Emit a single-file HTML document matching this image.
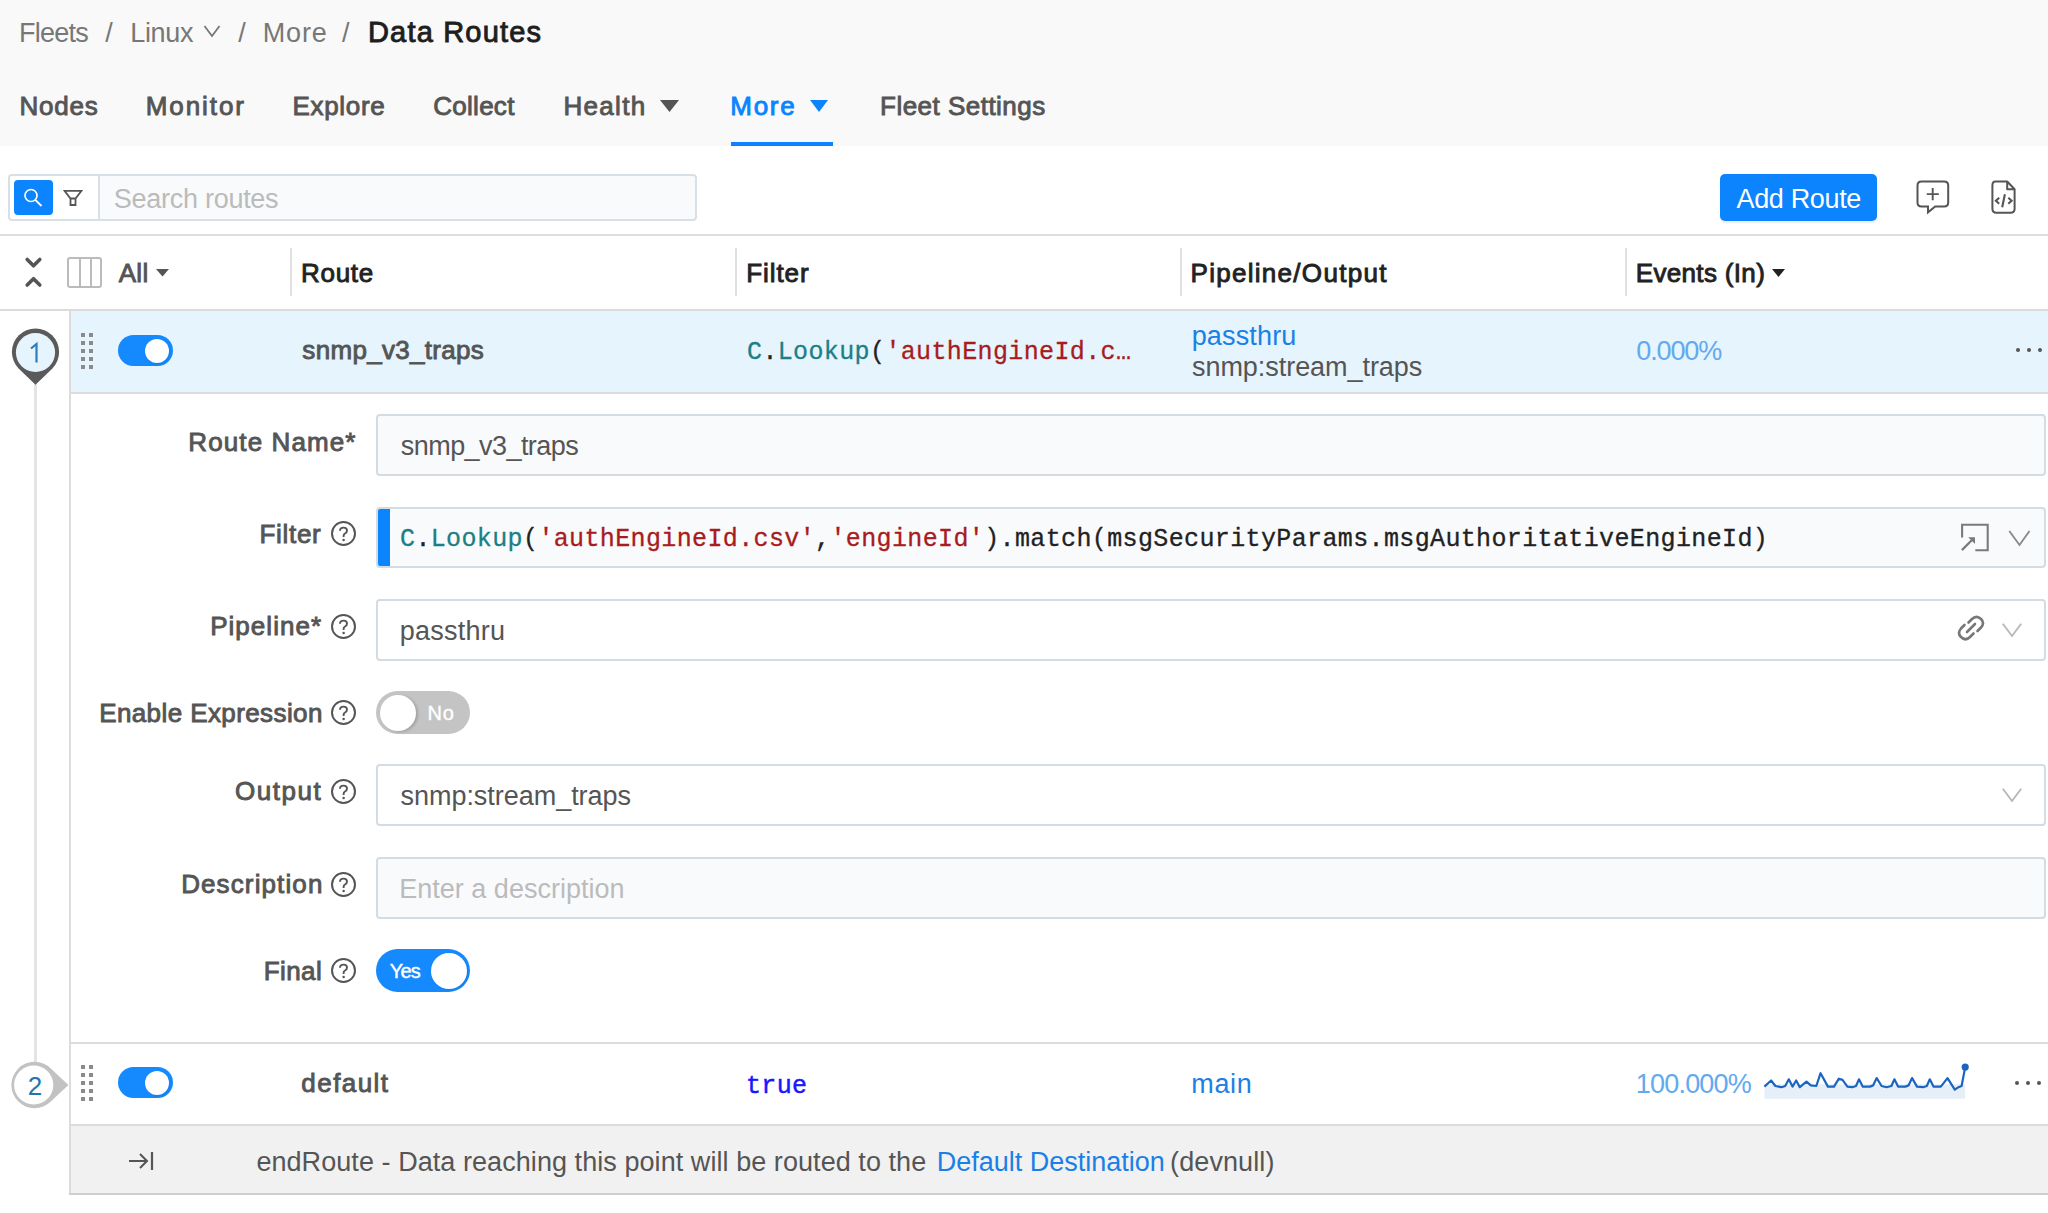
<!DOCTYPE html>
<html><head><meta charset="utf-8"><title>Data Routes</title>
<style>
html,body{margin:0;padding:0;width:2048px;height:1213px;overflow:hidden;background:#fff;font-family:"Liberation Sans",sans-serif;}
.t{position:absolute;white-space:nowrap;}
</style></head><body>
<div style="position:absolute;left:0;top:0;width:2048px;height:146px;background:#f9f9f9"></div>
<div class="t" style="left:19.10px;top:19.50px;font-size:27px;line-height:27px;color:#777;letter-spacing:-0.765px;">Fleets</div>
<div class="t" style="left:105.20px;top:19.50px;font-size:27px;line-height:27px;color:#777;">/</div>
<div class="t" style="left:130.20px;top:19.50px;font-size:27px;line-height:27px;color:#777;letter-spacing:-0.312px;">Linux</div>
<svg style="position:absolute;left:203px;top:24px" width="20" height="14" viewBox="0 0 20 14"><path d="M1.5 2 L9 12 L16.5 2" fill="none" stroke="#777" stroke-width="1.8"/></svg>
<div class="t" style="left:238.20px;top:19.50px;font-size:27px;line-height:27px;color:#777;">/</div>
<div class="t" style="left:262.80px;top:19.50px;font-size:27px;line-height:27px;color:#777;letter-spacing:0.834px;">More</div>
<div class="t" style="left:342.00px;top:19.50px;font-size:27px;line-height:27px;color:#777;">/</div>
<div class="t" style="left:367.95px;top:18.20px;font-size:29px;line-height:29px;color:#1e1e1e;-webkit-text-stroke:0.9px #1e1e1e;letter-spacing:1.190px;">Data Routes</div>
<div class="t" style="left:19.55px;top:93.00px;font-size:26px;line-height:26px;color:#555;-webkit-text-stroke:0.9px #555;letter-spacing:0.736px;">Nodes</div>
<div class="t" style="left:145.65px;top:93.00px;font-size:26px;line-height:26px;color:#555;-webkit-text-stroke:0.9px #555;letter-spacing:1.944px;">Monitor</div>
<div class="t" style="left:292.45px;top:93.00px;font-size:26px;line-height:26px;color:#555;-webkit-text-stroke:0.9px #555;letter-spacing:0.684px;">Explore</div>
<div class="t" style="left:433.25px;top:93.00px;font-size:26px;line-height:26px;color:#555;-webkit-text-stroke:0.9px #555;letter-spacing:0.275px;">Collect</div>
<div class="t" style="left:563.45px;top:93.00px;font-size:26px;line-height:26px;color:#555;-webkit-text-stroke:0.9px #555;letter-spacing:1.321px;">Health</div>
<svg style="position:absolute;left:660px;top:100px" width="19" height="12" viewBox="0 0 19 12"><path d="M0 0 H19 L9.5 12 Z" fill="#555"/></svg>
<div class="t" style="left:730.25px;top:93.00px;font-size:26px;line-height:26px;color:#0b84fe;-webkit-text-stroke:0.9px #0b84fe;letter-spacing:1.741px;">More</div>
<svg style="position:absolute;left:810px;top:100px" width="18" height="12" viewBox="0 0 18 12"><path d="M0 0 H18 L9 12 Z" fill="#0b84fe"/></svg>
<div class="t" style="left:880.05px;top:93.00px;font-size:26px;line-height:26px;color:#555;-webkit-text-stroke:0.9px #555;letter-spacing:0.479px;">Fleet Settings</div>
<div style="position:absolute;left:730.5px;top:142px;width:102.5px;height:4px;background:#0b84fe"></div>
<div style="position:absolute;left:8px;top:174px;width:685px;height:43px;border:2px solid #d8dfe6;border-radius:4px;background:#f9fafc"></div>
<div style="position:absolute;left:10px;top:176px;width:89px;height:43px;background:#fff;border-radius:3px 0 0 3px"></div>
<div style="position:absolute;left:98px;top:176px;width:2px;height:43px;background:#d8dfe6"></div>
<div style="position:absolute;left:14px;top:180px;width:39px;height:35px;background:#0b84fe;border-radius:4px"></div>
<svg style="position:absolute;left:22px;top:187px" width="22" height="22" viewBox="0 0 22 22"><circle cx="9" cy="8.5" r="6" fill="none" stroke="#fff" stroke-width="1.7"/><path d="M13.3 12.8 L19.5 19" stroke="#fff" stroke-width="1.8"/></svg>
<svg style="position:absolute;left:63px;top:188px" width="20" height="19" viewBox="0 0 20 19"><path d="M1.5 2.8 H18.5 L12.5 10.5 H7.5 Z M7.5 10.5 H12.5 V17 H7.5 Z" fill="none" stroke="#555" stroke-width="1.8" stroke-linejoin="miter"/></svg>
<div class="t" style="left:113.80px;top:185.50px;font-size:27px;line-height:27px;color:#bbb;letter-spacing:-0.274px;">Search routes</div>
<div style="position:absolute;left:1720px;top:174px;width:157px;height:47px;background:#0b84fe;border-radius:5px;box-shadow:0 2px 2px rgba(0,0,0,0.08)"></div>
<div class="t" style="left:1736.50px;top:185.70px;font-size:27px;line-height:27px;color:#fff;letter-spacing:-0.347px;">Add Route</div>
<svg style="position:absolute;left:1914px;top:179px" width="38" height="37" viewBox="0 0 38 37"><path d="M7.5 2.5 H30.2 Q34.2 2.5 34.2 6.5 V23.5 Q34.2 27.5 30.2 27.5 H21.2 L14 33.3 V27.5 H7.5 Q3.5 27.5 3.5 23.5 V6.5 Q3.5 2.5 7.5 2.5 Z" fill="none" stroke="#555" stroke-width="2" stroke-linejoin="miter"/><path d="M18.7 9 V21.2 M12.8 15.1 H24.8" stroke="#555" stroke-width="1.9"/></svg>
<svg style="position:absolute;left:1989px;top:179px" width="30" height="37" viewBox="0 0 30 37"><path d="M6.4 2.5 H18.2 L25.6 10.3 V29.8 Q25.6 33.8 21.6 33.8 H7.4 Q3.4 33.8 3.4 29.8 V6.5 Q3.4 2.5 6.4 2.5 Z M18.2 2.5 V10.3 H25.6" fill="none" stroke="#555" stroke-width="2" stroke-linejoin="round"/><path d="M10.2 18.7 L6.9 21.7 L10.2 24.7 M19.3 18.7 L22.6 21.7 L19.3 24.7 M15.9 15.3 L13.2 28.2" fill="none" stroke="#555" stroke-width="2.1"/></svg>
<div style="position:absolute;left:0;top:234px;width:2048px;height:2px;background:#dedede"></div>
<svg style="position:absolute;left:23px;top:255px" width="21" height="35" viewBox="0 0 21 35"><path d="M4.2 4.5 L10.5 10.8 L16.8 4.5 M4.2 30 L10.5 23.7 L16.8 30" fill="none" stroke="#555" stroke-width="3.6" stroke-linecap="round" stroke-linejoin="round"/></svg>
<div style="position:absolute;left:67px;top:257px;width:31px;height:27px;border:2px solid #bbb;border-radius:3px"></div>
<div style="position:absolute;left:79px;top:259px;width:2px;height:27px;background:#bbb"></div>
<div style="position:absolute;left:90px;top:259px;width:2px;height:27px;background:#bbb"></div>
<div class="t" style="left:118.65px;top:259.90px;font-size:26px;line-height:26px;color:#555;-webkit-text-stroke:0.9px #555;letter-spacing:0.391px;">All</div>
<svg style="position:absolute;left:156px;top:269px" width="13" height="8" viewBox="0 0 13 8"><path d="M0 0 H13 L6.5 7.5 Z" fill="#555"/></svg>
<div style="position:absolute;left:289.5px;top:248px;width:2px;height:48px;background:#e0e0e0"></div>
<div style="position:absolute;left:734.5px;top:248px;width:2px;height:48px;background:#e0e0e0"></div>
<div style="position:absolute;left:1179.5px;top:248px;width:2px;height:48px;background:#e0e0e0"></div>
<div style="position:absolute;left:1624.5px;top:248px;width:2px;height:48px;background:#e0e0e0"></div>
<div class="t" style="left:300.95px;top:259.90px;font-size:26px;line-height:26px;color:#222;-webkit-text-stroke:0.9px #222;letter-spacing:0.745px;">Route</div>
<div class="t" style="left:746.25px;top:259.90px;font-size:26px;line-height:26px;color:#222;-webkit-text-stroke:0.9px #222;letter-spacing:0.916px;">Filter</div>
<div class="t" style="left:1190.55px;top:259.90px;font-size:26px;line-height:26px;color:#222;-webkit-text-stroke:0.9px #222;letter-spacing:1.288px;">Pipeline/Output</div>
<div class="t" style="left:1635.75px;top:259.90px;font-size:26px;line-height:26px;color:#222;-webkit-text-stroke:0.9px #222;letter-spacing:0.335px;">Events (In)</div>
<svg style="position:absolute;left:1772px;top:269px" width="13" height="8" viewBox="0 0 13 8"><path d="M0 0 H13 L6.5 8 Z" fill="#222"/></svg>
<div style="position:absolute;left:0;top:309px;width:2048px;height:2px;background:#dcdcdc"></div>
<div style="position:absolute;left:71px;top:311px;width:1977px;height:81px;background:#e6f4fd"></div>
<div style="position:absolute;left:71px;top:392px;width:1977px;height:2px;background:#dcdcdc"></div>
<div style="position:absolute;left:69px;top:311px;width:2px;height:884px;background:#dcdcdc"></div>
<div style="position:absolute;left:33.8px;top:370px;width:3.7px;height:700px;background:#e4e4e6"></div>
<svg style="position:absolute;left:10px;top:327px" width="52" height="60" viewBox="0 0 52 60"><path d="M25.5 57.8 L8.6 41.5 A23.6 23.6 0 1 1 42.4 41.5 Z" fill="#5a5a5a"/><circle cx="25.5" cy="25.5" r="19.6" fill="#e6f4fd"/></svg>
<svg style="position:absolute;left:28px;top:342px" width="14" height="22" viewBox="0 0 14 22"><path d="M8.5 20.5 V2 L3 6.5" fill="none" stroke="#2e7db8" stroke-width="2.2" stroke-linejoin="miter"/></svg>
<div style="position:absolute;left:81px;top:333px;width:4px;height:4px;background:#8a8a8a"></div><div style="position:absolute;left:89px;top:333px;width:4px;height:4px;background:#8a8a8a"></div><div style="position:absolute;left:81px;top:341px;width:4px;height:4px;background:#8a8a8a"></div><div style="position:absolute;left:89px;top:341px;width:4px;height:4px;background:#8a8a8a"></div><div style="position:absolute;left:81px;top:349px;width:4px;height:4px;background:#8a8a8a"></div><div style="position:absolute;left:89px;top:349px;width:4px;height:4px;background:#8a8a8a"></div><div style="position:absolute;left:81px;top:357px;width:4px;height:4px;background:#8a8a8a"></div><div style="position:absolute;left:89px;top:357px;width:4px;height:4px;background:#8a8a8a"></div><div style="position:absolute;left:81px;top:365px;width:4px;height:4px;background:#8a8a8a"></div><div style="position:absolute;left:89px;top:365px;width:4px;height:4px;background:#8a8a8a"></div>
<div style="position:absolute;left:118px;top:335px;width:55px;height:31px;border-radius:16px;background:#158aff"></div><div style="position:absolute;left:145px;top:339px;width:24px;height:24px;border-radius:12px;background:#fff;box-shadow:1px 2px 3px rgba(0,0,0,0.08)"></div>
<div class="t" style="left:302.35px;top:337.20px;font-size:26px;line-height:26px;color:#555;-webkit-text-stroke:0.9px #555;letter-spacing:0.312px;">snmp_v3_traps</div>
<div class="t" id="code1" style="left:747px;top:340px;font-family:'Liberation Mono', monospace;font-size:25px;line-height:25px;letter-spacing:0.37px;-webkit-text-stroke:0.3px;color:#222"><span style="color:#1c7f86">C</span>.<span style="color:#1c7f86">Lookup</span>(<span style="color:#a81c20">'authEngineId.c…</span></div>
<div class="t" style="left:1191.70px;top:322.80px;font-size:27px;line-height:27px;color:#1a80e6;letter-spacing:0.151px;">passthru</div>
<div class="t" style="left:1192.00px;top:353.90px;font-size:27px;line-height:27px;color:#555;letter-spacing:-0.049px;">snmp:stream_traps</div>
<div class="t" style="left:1636.30px;top:337.70px;font-size:27px;line-height:27px;color:#62aaf0;letter-spacing:-1.133px;">0.000%</div>
<div style="position:absolute;left:2015.5px;top:347.5px;width:4.2px;height:4.2px;border-radius:50%;background:#555"></div><div style="position:absolute;left:2026.9px;top:347.5px;width:4.2px;height:4.2px;border-radius:50%;background:#555"></div><div style="position:absolute;left:2038.3px;top:347.5px;width:4.2px;height:4.2px;border-radius:50%;background:#555"></div>
<div class="t" style="left:188.35px;top:428.90px;font-size:26px;line-height:26px;color:#555;-webkit-text-stroke:0.9px #555;letter-spacing:1.104px;">Route Name*</div>
<div style="position:absolute;left:376px;top:414px;width:1666px;height:58px;border:2px solid #d3dbe3;border-radius:4px;background:#f9fafc"></div>
<div class="t" style="left:400.80px;top:432.50px;font-size:27px;line-height:27px;color:#555;letter-spacing:-0.558px;">snmp_v3_traps</div>
<div class="t" style="left:259.45px;top:521.10px;font-size:26px;line-height:26px;color:#555;-webkit-text-stroke:0.9px #555;letter-spacing:0.696px;">Filter</div>
<svg style="position:absolute;left:330px;top:520.2px" width="27" height="27" viewBox="0 0 27 27"><circle cx="13.5" cy="13.5" r="11.5" fill="none" stroke="#555" stroke-width="2"/><path d="M10 10.8 Q10 7.6 13.6 7.6 Q17 7.6 17 10.5 Q17 12.6 15 13.5 Q13.6 14.2 13.6 16 V17" fill="none" stroke="#555" stroke-width="1.9"/><circle cx="13.6" cy="20" r="1.25" fill="#555"/></svg>
<div style="position:absolute;left:376px;top:507px;width:1666px;height:57px;border:2px solid #d3dbe3;border-radius:4px;background:#f9fafc"></div>
<div style="position:absolute;left:378px;top:509px;width:12px;height:57px;background:#0b84fe;border-radius:2px 0 0 2px"></div>
<div class="t" id="code2" style="left:400px;top:527px;font-family:'Liberation Mono', monospace;font-size:25px;line-height:25px;letter-spacing:0.37px;-webkit-text-stroke:0.3px;color:#222"><span style="color:#1c7f86">C</span>.<span style="color:#1c7f86">Lookup</span>(<span style="color:#a81c20">'authEngineId.csv'</span>,<span style="color:#a81c20">'engineId'</span>).match(msgSecurityParams.msgAuthoritativeEngineId)</div>
<svg style="position:absolute;left:1958px;top:521px" width="34" height="32" viewBox="0 0 34 32"><path d="M4.1 16.4 V3.8 H29.7 V29.2 H17.3" fill="none" stroke="#7a7a7a" stroke-width="2.1"/><path d="M3.9 29.1 L14.2 18.8" fill="none" stroke="#7a7a7a" stroke-width="2.2"/><path d="M10.2 16.2 H17 V23 Z" fill="#7a7a7a"/></svg>
<svg style="position:absolute;left:2008px;top:529px" width="24" height="20" viewBox="0 0 24 20"><path d="M1.3 2 L11.5 16 L21.5 2" fill="none" stroke="#8a8a8a" stroke-width="1.9"/></svg>
<div class="t" style="left:210.15px;top:612.70px;font-size:26px;line-height:26px;color:#555;-webkit-text-stroke:0.9px #555;letter-spacing:1.049px;">Pipeline*</div>
<svg style="position:absolute;left:330px;top:613.0px" width="27" height="27" viewBox="0 0 27 27"><circle cx="13.5" cy="13.5" r="11.5" fill="none" stroke="#555" stroke-width="2"/><path d="M10 10.8 Q10 7.6 13.6 7.6 Q17 7.6 17 10.5 Q17 12.6 15 13.5 Q13.6 14.2 13.6 16 V17" fill="none" stroke="#555" stroke-width="1.9"/><circle cx="13.6" cy="20" r="1.25" fill="#555"/></svg>
<div style="position:absolute;left:376px;top:599px;width:1666px;height:58px;border:2px solid #d3dbe3;border-radius:4px;background:#fff"></div>
<div class="t" style="left:399.70px;top:618.40px;font-size:27px;line-height:27px;color:#555;letter-spacing:0.251px;">passthru</div>
<svg style="position:absolute;left:1955px;top:612px" width="32" height="32" viewBox="0 0 32 32"><g fill="none" stroke="#777" stroke-width="2.6" stroke-linecap="round"><path d="M13.5 10.5 L17 7 Q21.5 2.5 26 7 Q30 11 26 15.5 L22.5 19"/><path d="M18.5 21.5 L15 25 Q10.5 29.5 6 25 Q2 21 6 16.5 L9.5 13"/><path d="M12 20 L20 12"/></g></svg>
<svg style="position:absolute;left:2001px;top:621.5px" width="22" height="18" viewBox="0 0 22 18"><path d="M1.8 1.8 L11 14 L20.2 1.8" fill="none" stroke="#b8b8b8" stroke-width="1.9"/></svg>
<div class="t" style="left:99.15px;top:699.80px;font-size:26px;line-height:26px;color:#555;-webkit-text-stroke:0.9px #555;letter-spacing:0.404px;">Enable Expression</div>
<svg style="position:absolute;left:330px;top:699.2px" width="27" height="27" viewBox="0 0 27 27"><circle cx="13.5" cy="13.5" r="11.5" fill="none" stroke="#555" stroke-width="2"/><path d="M10 10.8 Q10 7.6 13.6 7.6 Q17 7.6 17 10.5 Q17 12.6 15 13.5 Q13.6 14.2 13.6 16 V17" fill="none" stroke="#555" stroke-width="1.9"/><circle cx="13.6" cy="20" r="1.25" fill="#555"/></svg>
<div style="position:absolute;left:376px;top:691px;width:94px;height:43px;border-radius:22px;background:#c4c4c4"></div>
<div style="position:absolute;left:379.5px;top:695px;width:36px;height:36px;border-radius:18px;background:#fff;box-shadow:2px 1px 3px rgba(0,0,0,0.18)"></div>
<div class="t" style="left:427.50px;top:703.00px;font-size:20px;line-height:20px;color:#fff;letter-spacing:0.757px;-webkit-text-stroke:0.4px #fff;">No</div>
<div class="t" style="left:234.95px;top:778.20px;font-size:26px;line-height:26px;color:#555;-webkit-text-stroke:0.9px #555;letter-spacing:1.555px;">Output</div>
<svg style="position:absolute;left:330px;top:778.1px" width="27" height="27" viewBox="0 0 27 27"><circle cx="13.5" cy="13.5" r="11.5" fill="none" stroke="#555" stroke-width="2"/><path d="M10 10.8 Q10 7.6 13.6 7.6 Q17 7.6 17 10.5 Q17 12.6 15 13.5 Q13.6 14.2 13.6 16 V17" fill="none" stroke="#555" stroke-width="1.9"/><circle cx="13.6" cy="20" r="1.25" fill="#555"/></svg>
<div style="position:absolute;left:376px;top:764px;width:1666px;height:58px;border:2px solid #d3dbe3;border-radius:4px;background:#fff"></div>
<div class="t" style="left:400.50px;top:783.00px;font-size:27px;line-height:27px;color:#555;letter-spacing:-0.036px;">snmp:stream_traps</div>
<svg style="position:absolute;left:2001px;top:786.5px" width="22" height="18" viewBox="0 0 22 18"><path d="M1.8 1.8 L11 14 L20.2 1.8" fill="none" stroke="#b8b8b8" stroke-width="1.9"/></svg>
<div class="t" style="left:181.15px;top:871.10px;font-size:26px;line-height:26px;color:#555;-webkit-text-stroke:0.9px #555;letter-spacing:1.121px;">Description</div>
<svg style="position:absolute;left:330px;top:870.5px" width="27" height="27" viewBox="0 0 27 27"><circle cx="13.5" cy="13.5" r="11.5" fill="none" stroke="#555" stroke-width="2"/><path d="M10 10.8 Q10 7.6 13.6 7.6 Q17 7.6 17 10.5 Q17 12.6 15 13.5 Q13.6 14.2 13.6 16 V17" fill="none" stroke="#555" stroke-width="1.9"/><circle cx="13.6" cy="20" r="1.25" fill="#555"/></svg>
<div style="position:absolute;left:376px;top:857px;width:1666px;height:58px;border:2px solid #d3dbe3;border-radius:4px;background:#f9fafc"></div>
<div class="t" style="left:399.20px;top:876.10px;font-size:27px;line-height:27px;color:#bbb;letter-spacing:0.016px;">Enter a description</div>
<div class="t" style="left:263.65px;top:957.80px;font-size:26px;line-height:26px;color:#555;-webkit-text-stroke:0.9px #555;letter-spacing:0.430px;">Final</div>
<svg style="position:absolute;left:330px;top:957.1px" width="27" height="27" viewBox="0 0 27 27"><circle cx="13.5" cy="13.5" r="11.5" fill="none" stroke="#555" stroke-width="2"/><path d="M10 10.8 Q10 7.6 13.6 7.6 Q17 7.6 17 10.5 Q17 12.6 15 13.5 Q13.6 14.2 13.6 16 V17" fill="none" stroke="#555" stroke-width="1.9"/><circle cx="13.6" cy="20" r="1.25" fill="#555"/></svg>
<div style="position:absolute;left:376px;top:949px;width:94px;height:43px;border-radius:22px;background:#158aff"></div>
<div style="position:absolute;left:430.5px;top:952.5px;width:36px;height:36px;border-radius:18px;background:#fff;box-shadow:1px 1px 2px rgba(0,0,0,0.1)"></div>
<div class="t" style="left:389.70px;top:960.70px;font-size:20px;line-height:20px;color:#fff;letter-spacing:-0.813px;-webkit-text-stroke:0.4px #fff;">Yes</div>
<div style="position:absolute;left:71px;top:1042px;width:1977px;height:2px;background:#dcdcdc"></div>
<svg style="position:absolute;left:10px;top:1060px" width="62" height="50" viewBox="0 0 62 50"><path d="M58.4 25 L40.8 8.4 A23.2 23.2 0 1 0 40.8 41.6 Z" fill="#c2c2c2"/><circle cx="23.7" cy="25" r="19.6" fill="#fff"/></svg>
<div class="t" style="left:27.70px;top:1072.70px;font-size:26px;line-height:26px;color:#2473b0;">2</div>
<div style="position:absolute;left:81px;top:1065px;width:4px;height:4px;background:#8a8a8a"></div><div style="position:absolute;left:89px;top:1065px;width:4px;height:4px;background:#8a8a8a"></div><div style="position:absolute;left:81px;top:1073px;width:4px;height:4px;background:#8a8a8a"></div><div style="position:absolute;left:89px;top:1073px;width:4px;height:4px;background:#8a8a8a"></div><div style="position:absolute;left:81px;top:1081px;width:4px;height:4px;background:#8a8a8a"></div><div style="position:absolute;left:89px;top:1081px;width:4px;height:4px;background:#8a8a8a"></div><div style="position:absolute;left:81px;top:1089px;width:4px;height:4px;background:#8a8a8a"></div><div style="position:absolute;left:89px;top:1089px;width:4px;height:4px;background:#8a8a8a"></div><div style="position:absolute;left:81px;top:1097px;width:4px;height:4px;background:#8a8a8a"></div><div style="position:absolute;left:89px;top:1097px;width:4px;height:4px;background:#8a8a8a"></div>
<div style="position:absolute;left:118px;top:1067px;width:55px;height:31px;border-radius:16px;background:#158aff"></div><div style="position:absolute;left:145px;top:1071px;width:24px;height:24px;border-radius:12px;background:#fff;box-shadow:1px 2px 3px rgba(0,0,0,0.08)"></div>
<div class="t" style="left:301.35px;top:1070.20px;font-size:26px;line-height:26px;color:#555;-webkit-text-stroke:0.9px #555;letter-spacing:1.443px;">default</div>
<div class="t" style="left:746px;top:1074px;font-family:'Liberation Mono', monospace;font-size:25px;line-height:25px;letter-spacing:0.37px;-webkit-text-stroke:0.45px;color:#1818ff">true</div>
<div class="t" style="left:1191.20px;top:1071.40px;font-size:27px;line-height:27px;color:#1a80e6;letter-spacing:0.698px;">main</div>
<div class="t" style="left:1635.80px;top:1071.40px;font-size:27px;line-height:27px;color:#62aaf0;letter-spacing:-0.800px;">100.000%</div>
<svg style="position:absolute;left:0;top:0" width="2048" height="1213"><rect x="1764.4" y="1084.2" width="200.8" height="14.6" fill="#e6eff8"/><polyline points="1764.4,1086.6 1771.1,1080.5 1775.4,1086.0 1781.5,1087.2 1785.2,1086.0 1788.8,1079.3 1792.5,1086.6 1796.2,1080.5 1799.8,1087.2 1806.5,1081.7 1810.8,1085.4 1816.3,1086.0 1820.6,1073.2 1827.9,1086.6 1834.0,1086.6 1838.9,1078.7 1842.5,1079.9 1847.4,1086.6 1852.3,1087.2 1856.0,1086.0 1859.0,1079.3 1862.7,1086.6 1870.0,1086.6 1873.1,1085.4 1876.7,1078.1 1881.6,1086.0 1886.5,1087.2 1891.4,1086.0 1894.4,1079.3 1898.1,1086.6 1905.4,1086.6 1908.5,1085.4 1912.1,1078.1 1917.0,1086.6 1923.1,1087.2 1926.8,1086.0 1929.8,1079.3 1933.5,1086.6 1940.8,1086.6 1947.5,1078.1 1954.8,1089.7 1958.5,1087.2 1961.6,1086.0 1965.2,1067.1" fill="none" stroke="#1b64c2" stroke-width="2.2" stroke-linejoin="round"/><circle cx="1965.2" cy="1067.1" r="3.6" fill="#1b64c2"/></svg>
<div style="position:absolute;left:2014.5px;top:1080.5px;width:4.2px;height:4.2px;border-radius:50%;background:#555"></div><div style="position:absolute;left:2025.9px;top:1080.5px;width:4.2px;height:4.2px;border-radius:50%;background:#555"></div><div style="position:absolute;left:2037.3px;top:1080.5px;width:4.2px;height:4.2px;border-radius:50%;background:#555"></div>
<div style="position:absolute;left:71px;top:1124px;width:1977px;height:2px;background:#dcdcdc"></div>
<div style="position:absolute;left:71px;top:1126px;width:1977px;height:67px;background:#f1f1f1"></div>
<div style="position:absolute;left:69px;top:1193px;width:1979px;height:2px;background:#cfcfcf"></div>
<svg style="position:absolute;left:126px;top:1149px" width="30" height="24" viewBox="0 0 30 24"><path d="M3 12 H21 M14 5 L21 12 L14 19" fill="none" stroke="#555" stroke-width="2"/><path d="M26 3 V21" stroke="#555" stroke-width="2.2"/></svg>
<div class="t" style="left:256.40px;top:1148.50px;font-size:27px;line-height:27px;color:#555;letter-spacing:0.061px;">endRoute - Data reaching this point will be routed to the</div>
<div class="t" style="left:936.80px;top:1148.50px;font-size:27px;line-height:27px;color:#1a80e6;letter-spacing:-0.006px;">Default Destination</div>
<div class="t" style="left:1170.10px;top:1148.50px;font-size:27px;line-height:27px;color:#555;letter-spacing:0.093px;">(devnull)</div>
</body></html>
